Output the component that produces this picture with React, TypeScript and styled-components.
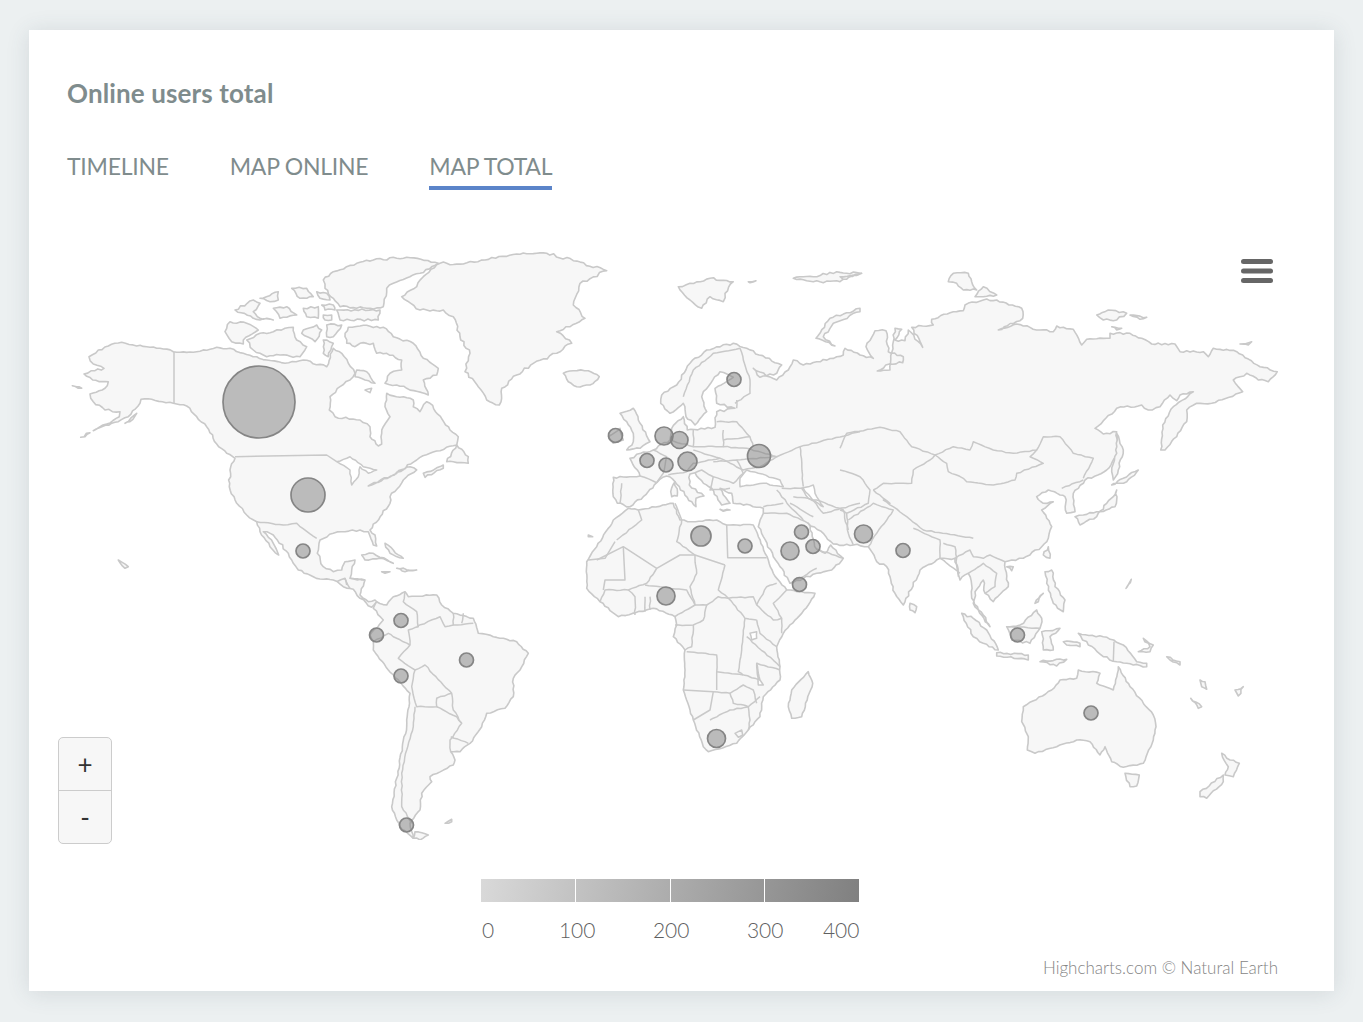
import React from "react";
import styled, { createGlobalStyle } from "styled-components";

const Global = createGlobalStyle`
  html, body { margin: 0; padding: 0; background: #ecf0f1; }
  body { font-family: Lato, "Open Sans", sans-serif; }
`;

const Page = styled.div`
  box-sizing: border-box;
  width: 1363px;
  height: 1022px;
  padding: 30px 29px 31px;
`;
const Card = styled.section`
  box-sizing: border-box;
  width: 1305px;
  height: 961px;
  background: #fff;
  box-shadow: 0 2px 22px rgba(60, 80, 90, 0.14);
  display: flex;
  flex-direction: column;
`;
const Header = styled.header`
  padding: 47px 38px 0;
`;
const Title = styled.h2`
  margin: 0;
  font-size: 26px;
  line-height: 32px;
  font-weight: 700;
  letter-spacing: 0.12px;
  color: #7f8c8d;
`;
const Tabs = styled.nav`
  display: flex;
  gap: 61px;
  margin-top: 42px;
`;
const Tab = styled.div<{ $active?: boolean }>`
  font-size: 23px;
  line-height: 30px;
  letter-spacing: -0.25px;
  color: #7f8c8d;
  padding-bottom: 5px;
  border-bottom: 4px solid ${(p) => (p.$active ? "#5b84c9" : "transparent")};
`;
const Chart = styled.div`
  position: relative;
  flex: 1;
  margin-top: 10px;
`;
const MapSvg = styled.svg`
  display: block;
  width: 1305px;
  height: 640px;
`;
const Land = styled.path`
  fill: #f7f7f7;
  stroke: #c9c9c9;
  stroke-width: 1.6;
  stroke-linejoin: round;
`;
const Water = styled.path`
  fill: #fff;
  stroke: #c9c9c9;
  stroke-width: 1.5;
  stroke-linejoin: round;
`;
const Border = styled.path`
  fill: none;
  stroke: #c9c9c9;
  stroke-width: 1.5;
  stroke-linejoin: round;
`;
const Bubble = styled.circle`
  fill: rgba(128, 128, 128, 0.5);
  stroke: #858585;
  stroke-width: 1.7;
`;
const MenuIcon = styled.svg`
  position: absolute;
  right: 60px;
  top: 58px;
  width: 34px;
  height: 28px;
`;
const Zoom = styled.div`
  position: absolute;
  left: 29px;
  top: 537px;
  width: 54px;
  box-sizing: border-box;
  border: 1.5px solid #cccccc;
  border-radius: 5px;
  background: #f7f7f7;
  display: flex;
  flex-direction: column;
`;
const ZoomBtn = styled.div`
  height: 52px;
  display: flex;
  align-items: center;
  justify-content: center;
  font-size: 26px;
  font-weight: 400;
  color: #333;
  & + & { border-top: 1.5px solid #cccccc; }
`;
const Legend = styled.div`
  width: 378px;
  margin: 39px 0 0 452px;
`;
const ColorBar = styled.div`
  height: 23px;
  display: grid;
  grid-template-columns: repeat(4, 1fr);
  background: linear-gradient(100deg, #d9d9d9 0%, #808080 100%);
`;
const Band = styled.div`
  & + & { border-left: 1.5px solid #fff; margin-left: -0.5px; }
`;
const Ticks = styled.div`
  display: grid;
  grid-template-columns: 78px 94px 94px 76px 36px;
  margin-top: 14px;
  font-size: 21px;
  line-height: 28px;
  font-weight: 300;
  letter-spacing: -0.1px;
  color: #5f5f5f;
`;
const Tick = styled.span<{ $indent?: boolean }>`
  padding-left: ${(p) => (p.$indent ? "1px" : "0")};
`;
const Credit = styled.div`
  text-align: right;
  padding-right: 56px;
  margin-top: 13px;
  font-size: 17px;
  line-height: 22px;
  font-weight: 300;
  color: #858585;
`;

type Pt = [number, number];
const Z = {
  a: [40, 240],
  b: [40, 530],
  c: [400, 240],
  d: [840, 240],
  e: [560, 490],
  f: [940, 530],
} as const;
type Key = keyof typeof Z;
const seg = (k: Key, s: string): Pt[] =>
  s.trim().split(/\s+/).map((p) => {
    const [x, y] = p.split(",").map(Number);
    return [Z[k][0] + x / 3, Z[k][1] + y / 3] as Pt;
  });
const noise = (a: number, b: number) => {
  const s = Math.sin(a * 12.9898 + b * 78.233) * 43758.5453;
  return (s - Math.floor(s) - 0.5) * 2;
};
const rough = (pts: Pt[], close: boolean, amp: number, step = 3.5): Pt[] => {
  const out: Pt[] = [];
  const n = pts.length;
  const last = close ? n : n - 1;
  for (let i = 0; i < last; i++) {
    const a = pts[i];
    const b = pts[(i + 1) % n];
    const dx = b[0] - a[0];
    const dy = b[1] - a[1];
    const len = Math.hypot(dx, dy) || 1;
    const count = Math.max(1, Math.round(len / step));
    out.push(a);
    for (let j = 1; j < count; j++) {
      const t = j / count;
      const x = a[0] + dx * t;
      const y = a[1] + dy * t;
      const o = noise(x, y) * amp;
      out.push([x - (dy / len) * o, y + (dx / len) * o]);
    }
  }
  if (!close) out.push(pts[n - 1]);
  return out;
};
const toD = (pts: Pt[], close: boolean) =>
  "M" + pts.map((p) => p[0].toFixed(1) + " " + p[1].toFixed(1)).join("L") + (close ? "Z" : "");
const coast = (pts: Pt[], amp = 1.1) => toD(rough(pts, true, amp), true);
const poly = (k: Key, s: string, amp = 1.1) => coast(seg(k, s), amp);
const line = (k: Key, s: string) => toD(rough(seg(k, s), false, 0.55, 4), false);
const straight = (k: Key, s: string) => toD(seg(k, s), false);

const northAmerica = coast([
  ...seg("a", "400,335 370,327 320,320 290,318 245,307 205,318 175,330 147,350 160,372 192,385 165,392 132,402 158,420 205,425 195,445 150,462 160,485 195,510 240,515 238,530 160,572 235,545 265,530 300,490 303,478 335,478 400,490 440,498 470,530 500,560 530,612 560,640 585,655 570,690 568,740 590,790 620,825 650,845"),
  ...seg("b", "660,5 690,50 716,75 700,40 670,5 700,15 745,70 760,100 775,120 820,140 850,148 880,150 910,170 940,178 960,205 995,232 1010,215 1005,210 985,215 960,195 975,150 930,145 935,120 945,90 915,95 905,120 880,125 850,110 832,70 840,30 880,10 915,5 960,0 985,5 1000,45 1010,48 1005,15 990,0"),
  ...seg("a", "1050,790 1050,770 1090,720 1130,690 1110,680 985,738 1060,705 1130,660 1170,640 1250,615 1255,590 1230,570 1170,490 1160,485 1140,515 1120,500 1120,480 1040,460 1035,500 1050,530 1030,560 1025,580 1025,612 1015,618 990,590 990,560 960,540 885,530 868,510 870,470 900,440 930,420 945,400 925,370 905,340 880,325 860,380 790,360 735,370 680,360 650,350 610,340 570,325 530,322 470,335"),
]);

const eurasia = coast([
  ...seg("c", "1090,805 1050,795 1000,790 995,760 960,745 990,790 965,795 935,745 905,722 885,698 870,702 868,735 912,768 888,775 888,800 862,772 825,725 800,708 770,728 730,770 690,800 652,790 640,770 640,712 700,710 720,708 690,655 722,640 760,630 810,600 815,565 850,530 862,570 945,562 950,515 1005,505 950,490 945,445 1000,412 960,395 910,455 905,470 920,515 885,555 858,530 850,490 810,520 782,490 785,465 830,435 870,370 920,330 1000,310 1040,325 1145,375 1130,400 1080,412 1060,385 1130,420 1165,390 1180,360 1210,375 1330,345 1335,325 1380,345"),
  ...seg("d", "100,355 78,320 105,272 138,272 145,335 190,350 188,368 148,372 112,393 150,390 160,305 165,265 185,268 165,300 195,302 205,270 248,322 215,262 280,255 275,238 340,215 370,212 375,195 430,180 470,180 545,205 548,235 475,270 530,252 600,270 640,275 650,258 700,268 725,315 740,298 810,295 810,280 870,280 905,295 935,312 1005,312 1020,335 1090,335 1105,350 1120,325 1190,335 1260,380 1312,395 1285,425 1255,420 1220,400 1180,420 1208,455 1115,490 1070,490 1040,510 1040,545 1010,590 975,630 962,630 968,555 1000,500 1060,455 1020,465 1010,482 990,465 960,500 925,510 905,495 830,505 765,565 790,582 830,575 835,640 800,690 735,720 700,760 705,815 680,820 675,770 660,765 625,750 590,770 610,790 640,785 605,810 635,860 625,895"),
  ...seg("f", "305,50 250,85 215,90 195,95 205,170 160,215 135,190 130,150 105,185 100,220 130,255 150,290 115,240 95,205 95,165 85,130 60,150 45,85 0,85"),
  ...seg("e", "1080,240 1030,345 1005,310 980,230 950,215 925,170 880,165 820,162 790,130 745,100 770,178 795,190 812,165 850,205 815,240 770,250 690,280 660,230 640,200 610,140 595,110 610,70"),
]);

const lands: string[] = [
  northAmerica,
  eurasia,
  // Canadian arctic
  poly("a", "555,275 570,245 620,250 655,270 610,300 610,312 575,305"),
  poly("a", "620,300 660,280 700,275 735,265 760,262 770,300 800,320 780,350 720,345 680,350 640,330"),
  poly("a", "915,290 925,262 960,258 1030,262 1060,290 1120,310 1150,355 1195,385 1190,405 1150,420 1165,465 1100,445 1070,435 1035,430 1050,400 1085,390 1085,360 1040,340 1010,340 1000,310 960,310 945,320 920,310"),
  poly("a", "850,120 880,95 950,70 1000,60 1100,52 1195,70 1140,100 1060,130 1040,145 1030,200 990,205 900,200 880,175 855,145"),
  poly("a", "890,210 1020,210 1015,240 900,240"),
  poly("a", "585,210 640,180 660,190 640,215 660,235 700,240 640,235"),
  poly("a", "660,175 715,155 715,180 690,185"),
  poly("a", "755,145 800,145 820,170 780,175"),
  poly("a", "830,155 860,160 870,180 840,175"),
  poly("a", "700,205 740,200 770,225 720,235"),
  poly("a", "790,205 835,200 835,235 800,230"),
  poly("a", "845,195 880,195 885,210 855,210"),
  poly("a", "850,225 875,225 875,240 855,240"),
  poly("a", "790,270 830,255 845,270 825,305 785,280"),
  poly("a", "860,255 905,255 880,290 860,290"),
  poly("a", "850,300 880,310 865,350 850,340"),
  poly("a", "950,390 980,395 1005,430 975,420 945,410"),
  poly("a", "1250,615 1285,650 1285,670 1240,665 1220,665"),
  poly("a", "1150,700 1210,675 1210,685 1155,712"),
  poly("a", "97,437 125,445 110,440"),
  poly("a", "122,592 150,578 135,590"),
  poly("a", "255,550 290,520 270,545"),
  // Greenland, Iceland, UK
  poly("c", "120,70 190,72 255,60 350,42 440,40 520,62 620,92 540,130 520,195 555,235 470,275 515,310 470,340 400,370 350,405 305,445 298,495 260,480 235,440 195,395 210,340 180,290 160,230 130,210 60,210 5,170 50,140 70,110", 1.4),
  poly("c", "490,400 520,392 565,392 598,410 570,435 530,440 505,425"),
  poly("c", "660,520 700,505 715,540 750,605 720,625 680,630 700,605 700,580 680,545"),
  poly("c", "625,590 660,565 670,600 640,610"),
  poly("c", "835,140 870,130 930,115 1000,125 975,160 970,185 930,170 905,205 870,180"),
  poly("c", "1180,115 1240,110 1310,95 1380,100 1320,125 1240,125"),
  poly("c", "1248,295 1290,235 1380,205 1380,215 1300,250 1270,290 1305,318"),
  poly("c", "812,755 825,725 832,768 815,770"),
  poly("c", "1045,125 1068,122 1050,128"),
  // Russian arctic
  poly("d", "325,125 340,100 385,100 395,125 410,150 370,150 350,130"),
  poly("d", "405,170 430,140 470,165 430,170"),
  poly("d", "770,225 805,210 860,220 830,240 790,240"),
  poly("d", "870,225 920,232 900,238"),
  poly("d", "815,260 845,265 830,270"),
  poly("d", "1200,312 1235,305 1225,315"),
  poly("d", "0,110 65,100 10,118"),
  // Sakhalin, Japan
  poly("d", "830,580 850,630 835,690 820,720 815,695 830,640"),
  poly("d", "815,735 850,715 895,690 860,725 830,730"),
  poly("d", "830,750 825,800 780,815 730,825 705,830 720,855 770,830 800,790 820,770"),
  // Caribbean etc
  poly("b", "965,75 1000,70 1060,100 1020,85 975,90"),
  poly("b", "1070,115 1130,120 1095,125"),
  poly("b", "1025,125 1050,125 1035,130"),
  poly("b", "1035,40 1060,60 1090,85 1050,70"),
  poly("b", "1215,880 1235,868 1235,875"),
  poly("b", "235,90 265,110 255,115"),
  poly("b", "1125,905 1165,915 1140,930 1120,925"),
  // South America
  poly("b", "1010,215 1040,225 1060,200 1095,185 1105,200 1190,195 1205,225 1240,250 1300,265 1315,310 1360,320 1430,335 1465,370 1440,420 1420,445 1420,500 1395,535 1340,550 1325,590 1290,640 1260,665 1232,665 1245,690 1240,705 1170,740 1175,755 1145,790 1140,840 1110,880 1120,925 1080,890 1055,830 1070,745 1100,590 1110,490 1045,420 1000,360 1000,335 990,315 1030,270 1000,235", 0.8),
  // Africa
  poly("e", "160,90 205,55 235,60 340,40 360,90 395,95 470,90 500,105 580,105 592,130 625,210 640,250 680,300 765,310 745,345 670,430 650,470 660,530 660,570 610,620 600,680 565,720 530,760 445,785 430,770 400,690 370,600 375,540 375,480 340,440 350,405 345,380 280,355 175,380 120,335 80,295 80,215 110,170", 0.7),
  poly("e", "745,545 758,580 725,680 695,685 685,650 695,600", 0.6),
  poly("e", "1050,340 1070,350 1065,368 1050,360"),
  poly("e", "480,58 510,60 490,64"),
  poly("e", "85,135 98,140 85,140"),
  // SE Asia + Oceania
  poly("f", "65,250 100,265 140,300 175,360 130,340 100,320"),
  poly("f", "200,290 240,285 290,240 305,265 300,295 270,340 215,330"),
  poly("f", "170,368 265,375 265,390 170,378"),
  poly("f", "305,305 360,295 330,320 340,360 310,360"),
  poly("f", "315,125 335,120 345,170 375,210 370,245 340,220 320,160"),
  poly("f", "325,50 330,85 310,75"),
  poly("f", "200,110 220,110 215,122"),
  poly("f", "415,310 490,320 550,345 590,395 620,400 620,410 580,405 530,395 490,380 445,345"),
  poly("f", "610,325 640,345 630,365 595,365 630,350"),
  poly("f", "680,380 720,395 720,405 690,390"),
  poly("f", "300,395 380,388 350,408"),
  poly("f", "370,335 420,340 420,350 380,345"),
  poly("f", "285,220 310,190 295,215"),
  poly("f", "558,175 574,148 562,170"),
  poly("f", "250,530 335,480 360,450 410,445 415,420 480,430 470,460 520,480 535,410 570,470 640,555 648,590 640,630 610,700 550,712 515,695 495,650 480,675 450,635 410,630 350,650 285,670 262,660 265,620 245,575", 0.7),
  poly("f", "555,730 598,735 590,768 570,770"),
  poly("f", "845,670 870,690 898,700 880,740 855,735 865,710"),
  poly("f", "850,735 850,755 800,805 780,800 780,785"),
  poly("f", "752,505 785,530 775,535"),
  poly("f", "780,450 795,455 800,478 785,470"),
  poly("f", "885,480 910,470 895,498"),
];

const waters: string[] = [
  poly("c", "1020,715 1040,690 1075,700 1140,720 1150,740 1090,730 1020,740", 0.6),
  poly("c", "1205,745 1240,735 1245,760 1270,800 1255,790 1225,775", 0.6),
  poly("a", "890,665 930,650 970,680 1010,690 985,700 960,680 955,710 935,735 930,690", 0.6),
  poly("e", "570,430 590,425 590,445 575,450", 0.3),
  poly("e", "590,520 600,570 610,585 595,585", 0.3),
  poly("a", "975,450 995,445 990,458", 0.3),
];

const borders: string[] = [
  straight("a", "402,335 402,490"),
  straight("a", "585,650 860,645 890,665"),
  line("a", "650,845 730,855 770,850 830,895"),
  line("b", "890,155 915,145 920,165"),
  line("b", "930,145 975,150"),
  line("b", "915,145 930,175"),
  // South America
  line("b", "1095,185 1090,215 1130,245 1135,290 1105,300 1110,345 1075,385 1125,420 1155,405 1210,465 1235,490 1240,540 1265,580 1230,630 1232,665"),
  line("b", "1130,290 1200,260 1215,290 1240,285 1240,250"),
  line("b", "1240,285 1300,280"),
  line("b", "1265,280 1270,250"),
  line("b", "1000,335 1045,310 1060,320 1110,345"),
  line("b", "1125,420 1115,470 1130,530 1190,530 1190,505 1235,490"),
  line("b", "1190,530 1250,560 1265,580"),
  line("b", "1125,530 1120,590 1100,660 1085,730 1085,830 1115,880"),
  line("b", "1232,620 1285,640"),
  // Europe
  line("c", "850,470 880,390 940,340 1020,325"),
  line("c", "1020,325 1050,420 1050,460 1005,490"),
  line("c", "760,630 800,650 790,700 770,728"),
  line("c", "720,708 770,728"),
  line("c", "665,730 660,790"),
  line("c", "810,600 880,620 880,570"),
  line("c", "880,620 970,620 970,570"),
  line("c", "950,545 1010,545 1050,590 1060,620"),
  line("c", "970,600 1050,590"),
  line("c", "970,620 1040,625 1130,650 1080,680 1030,690 960,655 880,630"),
  line("c", "805,705 860,695 880,670 960,655"),
  line("c", "940,665 1010,660 1030,700 1000,730 940,710 905,690 885,698"),
  line("c", "940,710 930,750 990,745"),
  line("c", "1010,505 1010,480"),
  line("c", "1145,745 1210,745 1270,820 1380,790"),
  line("c", "1170,790 1240,830"),
  line("c", "1090,800 1150,790"),
  line("c", "1010,660 1130,650 1200,620 1210,740"),
  line("c", "1200,620 1380,575"),
  // Central Asia / China
  line("d", "0,625 20,580 120,562 180,575 215,620 285,645"),
  line("d", "285,645 340,620 390,630 400,605 460,630 520,640 590,630 610,590 660,590 700,640 760,655 730,715"),
  line("d", "285,645 320,670 325,695 370,715 380,725 460,735 525,720 530,700 610,670 570,650 590,630"),
  line("d", "285,645 270,660 220,690 215,730 130,730 100,750"),
  line("d", "0,690 60,710 90,750 85,790 20,820 25,870"),
  line("d", "100,750 150,790 130,780 200,830 250,870 400,895"),
  line("d", "665,745 730,720"),
  line("d", "20,820 0,810"),
  // Middle East / South Asia
  line("e", "650,0 690,50 730,90"),
  line("e", "700,20 770,30 850,60 865,130 880,165"),
  line("e", "865,90 940,40 1000,60 950,130 925,170"),
  line("e", "610,70 680,70 745,100"),
  line("e", "770,178 850,205"),
  line("e", "690,280 770,235"),
  line("e", "1060,115 1140,150 1140,205 1200,250"),
  line("e", "1150,160 1185,170 1195,260"),
  // Africa
  line("e", "235,60 245,90 170,150"),
  straight("e", "85,210 135,205 165,155"),
  straight("e", "110,210 190,170 195,270 135,270 130,300"),
  straight("e", "190,170 290,235 360,195 405,195 495,225"),
  line("e", "345,40 365,90 350,155 405,195"),
  straight("e", "500,105 503,203 620,203"),
  line("e", "405,195 410,250 390,290 405,345 440,345 475,320 505,325 555,385 590,390"),
  line("e", "495,225 475,300 505,325 580,320 590,345 640,390 665,385"),
  line("e", "590,345 620,290 650,280"),
  line("e", "680,300 640,340 665,385 665,430"),
  line("e", "290,235 260,280 205,300 135,300 120,335"),
  line("e", "205,300 225,320 225,375"),
  line("e", "255,320 255,365"),
  line("e", "270,320 270,360"),
  line("e", "255,285 300,290 380,300 405,345 345,380"),
  line("e", "345,405 400,405 430,390 440,345"),
  line("e", "400,405 395,470 375,480"),
  line("e", "555,385 545,480 540,510 535,545 550,555"),
  line("e", "590,390 600,430 650,470"),
  line("e", "560,440 650,520 660,530"),
  line("e", "380,485 470,495 470,545 550,555"),
  straight("e", "470,545 470,600"),
  straight("e", "370,600 460,605 450,660 400,690"),
  line("e", "460,605 510,610 520,640 565,650 600,620"),
  line("e", "510,610 550,585 580,600 590,640"),
  line("e", "450,690 510,660 565,650 570,690 565,720"),
  line("e", "550,555 600,570"),
  line("e", "660,540 590,520"),
  poly("e", "525,730 545,720 548,735 535,742", 0),
  // SE Asia / Oceania
  straight("f", "522,335 520,395"),
  line("f", "45,85 90,60 100,80 130,85 150,75 195,95"),
  line("f", "85,130 130,100 170,130 165,170 135,190"),
  line("f", "215,290 300,295"),
];

type B = [number, number, number];
const bubbles: B[] = [
  [259, 402, 36], [308, 495, 17], [303, 551, 7], [401, 620.5, 7], [376.5, 635, 7],
  [401, 676, 7], [466.5, 660, 7], [406.5, 825, 7], [615.5, 435.5, 7], [664, 436, 9],
  [679.5, 440, 8.5], [647, 460.5, 7], [666, 465, 7], [687.5, 461.5, 9.5], [759, 456, 11.5],
  [734, 379.5, 7], [701, 536, 10], [745, 546, 7], [790, 551, 9], [801.5, 532, 7],
  [813, 546.5, 7], [799.5, 584.5, 7], [863.5, 534, 9], [903, 550.5, 7], [666, 596, 9],
  [716.5, 738.5, 9], [1017.5, 635, 7], [1091, 713, 7],
];

export default function App() {
  return (
    <Page>
      <Global />
      <Card>
        <Header>
          <Title>Online users total</Title>
          <Tabs>
            <Tab>TIMELINE</Tab>
            <Tab>MAP ONLINE</Tab>
            <Tab $active>MAP TOTAL</Tab>
          </Tabs>
        </Header>
        <Chart>
          <MapSvg viewBox="29 200 1305 640">
            {lands.map((d, i) => (
              <Land key={i} d={d} />
            ))}
            {waters.map((d, i) => (
              <Water key={i} d={d} />
            ))}
            {borders.map((d, i) => (
              <Border key={i} d={d} />
            ))}
            {bubbles.map(([cx, cy, r], i) => (
              <Bubble key={i} cx={cx} cy={cy} r={r} />
            ))}
          </MapSvg>
          <MenuIcon viewBox="0 0 34 28">
            <g stroke="#666" strokeWidth="5" strokeLinecap="round">
              <line x1="3.5" y1="3.5" x2="30.5" y2="3.5" />
              <line x1="3.5" y1="13" x2="30.5" y2="13" />
              <line x1="3.5" y1="22.5" x2="30.5" y2="22.5" />
            </g>
          </MenuIcon>
          <Zoom>
            <ZoomBtn>+</ZoomBtn>
            <ZoomBtn>-</ZoomBtn>
          </Zoom>
          <Legend>
            <ColorBar>
              <Band />
              <Band />
              <Band />
              <Band />
            </ColorBar>
            <Ticks>
              <Tick $indent>0</Tick>
              <Tick>100</Tick>
              <Tick>200</Tick>
              <Tick>300</Tick>
              <Tick>400</Tick>
            </Ticks>
          </Legend>
          <Credit>Highcharts.com © Natural Earth</Credit>
        </Chart>
      </Card>
    </Page>
  );
}
